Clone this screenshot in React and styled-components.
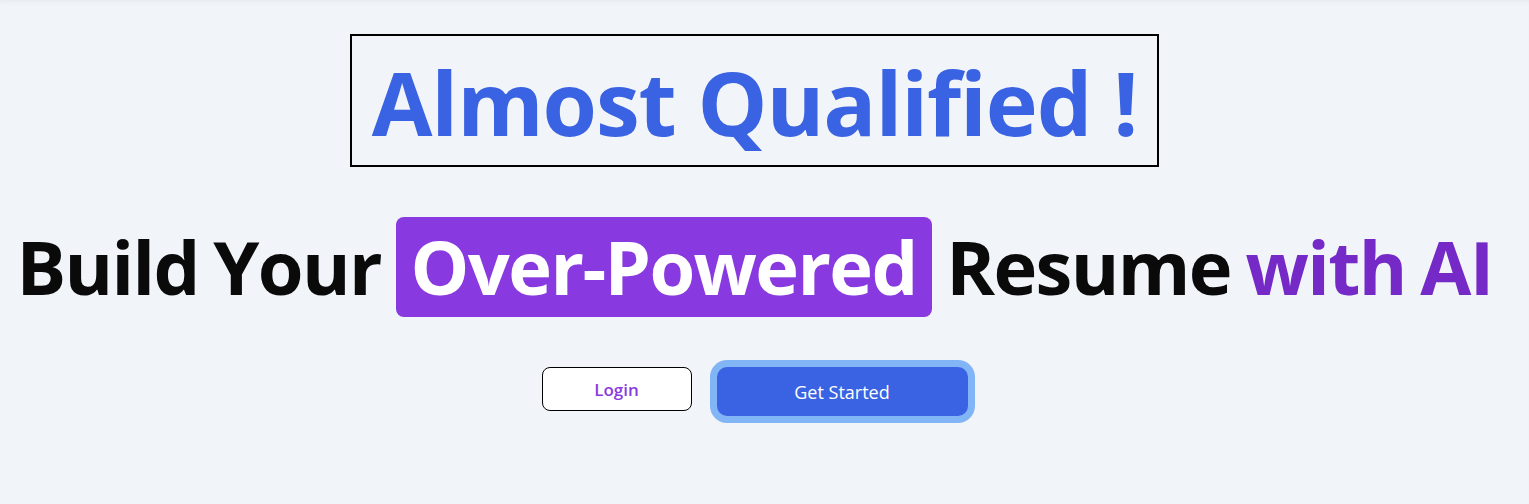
import React from "react";
import styled, { createGlobalStyle } from "styled-components";

const GlobalStyle = createGlobalStyle`
  body {
    margin: 0;
    background: #f1f4f9;
    font-family: "Open Sans", "Noto Sans", sans-serif;
  }
`;

const Page = styled.div`
  min-height: 100vh;
  display: flex;
  flex-direction: column;
  align-items: center;
  padding-right: 20px;
  box-shadow: inset 0 5px 6px -4px rgba(15, 23, 42, 0.06);
`;

const TitleBox = styled.h1`
  margin: 34px 0 0;
  padding: 4px 20px 0;
  border: 2px solid #000;
  font-size: 88px;
  line-height: 125px;
  letter-spacing: -0.012em;
  font-weight: 700;
  color: #3a63e3;
  white-space: nowrap;
`;

const Headline = styled.h2`
  margin: 50px 0 0;
  font-size: 74px;
  line-height: 100px;
  letter-spacing: -0.022em;
  word-spacing: -3px;
  font-weight: 700;
  color: #0a0a0a;
  white-space: nowrap;
`;

const Highlight = styled.span`
  display: inline-block;
  padding: 0 15px;
  border-radius: 8px;
  background: #8839e0;
  color: #fff;
`;

const Accent = styled.span`
  color: #7529c6;
`;

const Actions = styled.div`
  display: flex;
  align-items: flex-start;
  gap: 25px;
  margin-top: 50px;
`;

const Button = styled.button`
  font-family: inherit;
  cursor: pointer;
  font-weight: ${(p) => (p.$primary ? 500 : 600)};
  font-size: ${(p) => (p.$primary ? "18px" : "17px")};
  width: ${(p) => (p.$primary ? "251px" : "150px")};
  height: ${(p) => (p.$primary ? "49px" : "44px")};
  border: ${(p) => (p.$primary ? "none" : "1px solid #000")};
  background: ${(p) => (p.$primary ? "#3a63e3" : "#fff")};
  color: ${(p) => (p.$primary ? "#fff" : "#8a3be0")};
  box-shadow: ${(p) => (p.$primary ? "0 0 0 7px #82b5f6" : "none")};
  border-radius: ${(p) => (p.$primary ? "10px" : "8px")};
`;

export default function App() {
  return (
    <>
      <GlobalStyle />
      <Page>
        <TitleBox>Almost Qualified !</TitleBox>
        <Headline>
          Build Your <Highlight>Over-Powered</Highlight> Resume{" "}
          <Accent>with AI</Accent>
        </Headline>
        <Actions>
          <Button>Login</Button>
          <Button $primary>Get Started</Button>
        </Actions>
      </Page>
    </>
  );
}
